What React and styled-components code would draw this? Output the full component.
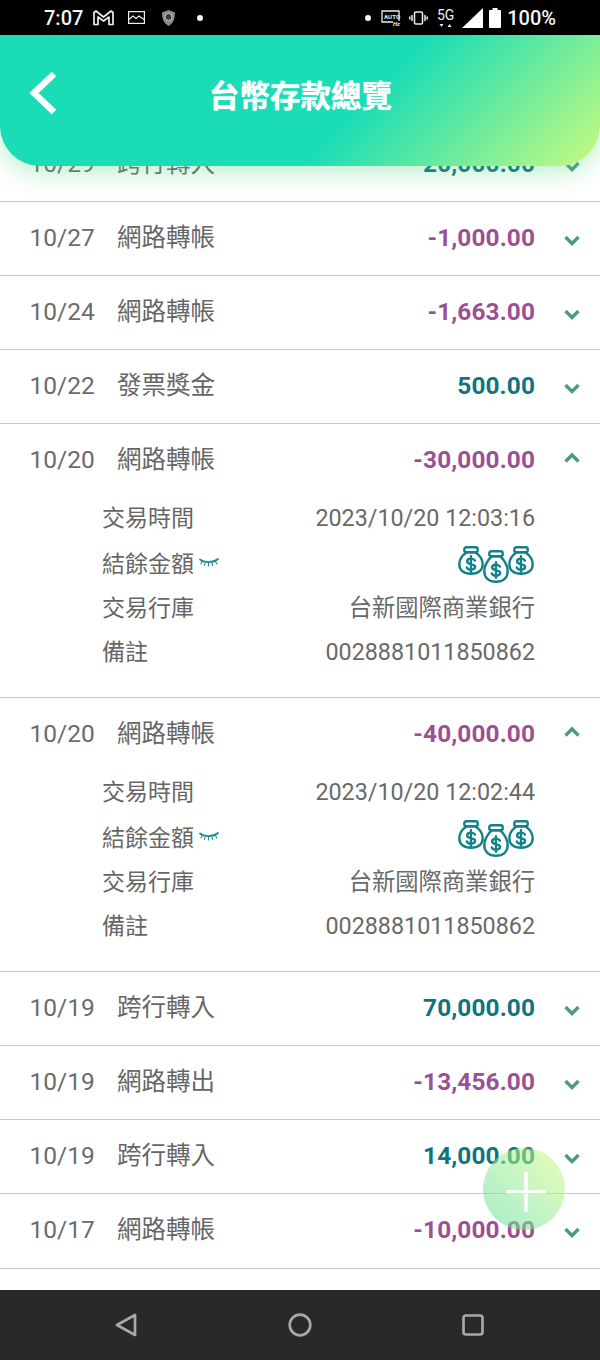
import React from "react";
import styled, { createGlobalStyle } from "styled-components";

const Global = createGlobalStyle`
  html, body { margin: 0; padding: 0; background: #fff; }
  * { box-sizing: border-box; }
  body { font-family: Roboto, "Noto Sans CJK TC", sans-serif; }
`;
const Screen = styled.div`
  width: 600px; height: 1360px; display: flex; flex-direction: column; overflow: hidden; position: relative;
`;
const StatusBar = styled.div`
  height: 35px; flex: none; background: #000; color: #f4f4f4; display: flex; align-items: center;
  padding: 0 44px 0 44px; font-family: Roboto, sans-serif; font-size: 20px; font-weight: 500;
`;
const StatusGroup = styled.div`
  display: flex; align-items: center; gap: ${p => p.$gap || 10}px;
`;
const Spacer = styled.div`flex: 1;`;
const Dot = styled.span`
  width: 6px; height: 6px; border-radius: 50%; background: #fff; display: block;
`;
const Main = styled.div`
  flex: 1; position: relative; overflow: hidden; background: #fff; min-height: 0;
`;
const Header = styled.div`
  position: absolute; top: 0; left: 0; right: 0; height: 131px; z-index: 2;
  border-radius: 0 0 40px 40px;
  background: linear-gradient(135deg, #1adcb7 0%, #1adcb7 59%, #c8fb80 100%);
  box-shadow: 0 6px 26px rgba(70, 215, 120, 0.38);
  display: flex; align-items: center; justify-content: center; color: #fff;
`;
const Back = styled.svg`
  position: absolute; left: 28px; top: 34px; width: 32px; height: 48px;
`;
const Title = styled.div`
  font-size: 30.5px; font-weight: 700; font-family: "Noto Sans CJK TC", sans-serif; line-height: 1; margin: 0 0 12px 1px;
  text-shadow: 0 0 1px #fff;
`;
const List = styled.div`
  margin-top: 93px; display: flex; flex-direction: column;
`;
const Row = styled.div`
  border-bottom: 1px solid #c9c9c9; padding: 0 20px 0 29.5px; color: #666;
  &:last-child { padding-bottom: 1px; }
`;
const Top = styled.div`
  height: 73px; padding-bottom: 3px; display: flex; align-items: center;
`;
const Date = styled.span`
  width: 87.5px; font-size: 24.5px; color: #6b6b6b;
`;
const Name = styled.span`
  flex: 1; font-size: 24.5px; font-family: "Noto Sans CJK TC", sans-serif; color: #666; line-height: 1; padding-bottom: 2px;
`;
const Amount = styled.span`
  font-size: 24.4px; font-weight: 700; letter-spacing: 0.1px; color: ${p => (p.$neg ? "#9b5094" : "#0d7480")};
`;
const Chevron = styled.svg`
  width: 16px; height: 12px; margin-left: 29px; margin-top: ${p => (p.$up ? -3 : 5)}px; flex: none;
`;
const Details = styled.div`
  padding: 0 45px 25px 72.5px; margin-top: -3px; display: flex; flex-direction: column;
`;
const DetailRow = styled.div`
  height: ${p => (p.$balance ? 46 : 44)}px; padding-top: ${p => (p.$balance ? 2 : 0)}px;
  display: flex; align-items: center; justify-content: space-between; color: #666;
`;
const Label = styled.span`
  font-family: "Noto Sans CJK TC", sans-serif; font-size: 23px; display: flex; align-items: center; gap: 5px; line-height: 1;
`;
const Value = styled.span`
  font-size: 23.300px; font-family: Roboto, "Noto Sans CJK TC", sans-serif; color: #696969; line-height: 1; padding-top: 5px;
`;
const BagsIcon = styled.svg`
  display: block; margin-top: 3px; flex: none;
`;
const Fab = styled.div`
  position: absolute; left: 483px; top: 1113px; width: 82px; height: 82px; border-radius: 50%; z-index: 3;
  background: linear-gradient(45deg, #60dca0 0%, #98ee95 50%, #d5fb7a 100%); opacity: 0.55;
  display: flex; align-items: center; justify-content: center; padding: 5px 0 0 4px;
`;
const NavBar = styled.div`
  height: 70px; flex: none; background: #292929; display: flex; align-items: center; justify-content: space-between;
  padding: 0 116px 0 115px;
`;

const Lash = () => (
  <svg width="20" height="12" viewBox="0 0 20 12" fill="none" stroke="#1f8f97" strokeLinecap="round">
    <path d="M1 3.500 C5 7, 14 7, 19 3" strokeWidth="1.800" />
    <path d="M3 5.500 2 8M6 6.800 5.500 9.500M9.500 7.200V10M13 6.800l.6 2.600M16.500 5.500 17.800 8" strokeWidth="1.100" />
  </svg>
);
const Bag = ({ x, y, tall }) => (
  <g transform={`translate(${x} ${y})`} stroke="#14808a" strokeLinejoin="round" strokeLinecap="round" fill="#fff">
    <path d={tall
      ? "M8.500 6.300C4 11 1.300 15 1.300 21c0 7 4.700 10.700 11.700 10.700S24.700 28 24.700 21c0-6-2.700-10-7.200-14.700Z"
      : "M8.800 6.300C4 9.500 1.300 13.500 1.300 18c0 6.500 4.700 9.700 11.700 9.700s11.700-3.200 11.700-9.700c0-4.500-2.700-8.500-7.500-11.700Z"} strokeWidth="2.400" />
    <rect x="6.300" y="1.200" width="13.400" height="5" rx="2" strokeWidth="2.400" />
    <g transform={`translate(0 ${tall ? 3 : 1})`}>
      <path d="M17 13.600c-.8-1.300-2.300-2-4-2-2.300 0-3.900 1.100-3.900 2.800 0 3.700 8 1.700 8 5.400 0 1.800-1.800 2.900-4.100 2.900-2 0-3.500-.8-4.200-2.300M13 9.300v15.400" fill="none" strokeWidth="2.400" />
    </g>
  </g>
);
const Bags = () => (
  <BagsIcon width="77" height="38" viewBox="0 0 77 38">
    <Bag x={0} y={1} />
    <Bag x={50} y={1} />
    <Bag x={25} y={5} tall />
  </BagsIcon>
);
const Chev = ({ up }) => (
  <Chevron $up={up} viewBox="0 0 16 12">
    <path d={up ? "M1.500 9.500 8 3l6.500 6.500" : "M1.500 3 8 9.500 14.500 3"} fill="none" stroke="#4f9a7c" strokeWidth="3.400" />
  </Chevron>
);

const rows = [
  ["10/29", "跨行轉入", "20,000.00", false],
  ["10/27", "網路轉帳", "-1,000.00", true],
  ["10/24", "網路轉帳", "-1,663.00", true],
  ["10/22", "發票獎金", "500.00", false],
  ["10/20", "網路轉帳", "-30,000.00", true, "2023/10/20 12:03:16"],
  ["10/20", "網路轉帳", "-40,000.00", true, "2023/10/20 12:02:44"],
  ["10/19", "跨行轉入", "70,000.00", false],
  ["10/19", "網路轉出", "-13,456.00", true],
  ["10/19", "跨行轉入", "14,000.00", false],
  ["10/17", "網路轉帳", "-10,000.00", true],
];

export default function App() {
  return (
    <Screen>
      <Global />
      <StatusBar>
        <StatusGroup $gap={9}>
          <span>7:07</span>
          <svg width="21" height="16" viewBox="0 0 21 16" fill="none" stroke="#eee" strokeWidth="1.700" strokeLinejoin="round" style={{ marginLeft: 1 }}><path d="M1 14.500V2.500l2-1.500 7.500 6L18 1l2 1.500v12h-4V7l-5.500 4L5 7v7.500Z" /></svg>
          <svg width="17" height="13" viewBox="0 0 17 13" fill="none" stroke="#eee" strokeWidth="1.200" style={{ marginLeft: 5 }}><rect x=".6" y=".6" width="15.800" height="11.800" /><path d="M1 8.500 5 5l3 2.500L11 5l5 3.500" /></svg>
          <svg width="15" height="18" viewBox="0 0 15 18" style={{ marginLeft: 7 }}><path d="M7.500 1 14 3.500c0 6-1.500 10.500-6.500 13.500C2.500 14 1 9.500 1 3.500Z" fill="#8c8c8c" /><circle cx="7.500" cy="8" r="3.500" fill="#3b3b3b" stroke="#c9c9c9" /></svg>
          <Dot style={{ marginLeft: 12 }} />
        </StatusGroup>
        <Spacer />
        <StatusGroup $gap={8}>
          <Dot style={{ marginRight: 2 }} />
          <svg width="20" height="18" viewBox="0 0 20 18" fill="none"><path d="M18 12V2H1v11h11" stroke="#eee" strokeWidth="1.300" /><text x="3" y="9.500" fontSize="6.200" fontWeight="700" fill="#eee" fontFamily="Roboto">AUTO</text><text x="12" y="16.500" fontSize="6" fontStyle="italic" fontWeight="700" fill="#eee" fontFamily="Roboto">Hz</text></svg>
          <svg width="19" height="14" viewBox="0 0 19 14" fill="none" stroke="#eee" strokeWidth="1.500"><rect x="5.500" y="1" width="8" height="12" rx="1.300" /><path d="M3 4v6M16 4v6M.8 5.500v3M18.200 5.500v3" /></svg>
          <svg width="17" height="24" viewBox="0 0 17 24" style={{ marginLeft: 1 }}><text x="0" y="14" fontSize="14" fontWeight="400" fill="#eee" fontFamily="Roboto">5G</text><path d="M2.500 18h4L4.500 21ZM10.500 21h4l-2-3Z" fill="#eee" /></svg>
          <svg width="21" height="20" viewBox="0 0 21 20"><path d="M21 0v20H0Z" fill="#fff" /></svg>
          <svg width="12" height="20" viewBox="0 0 12 20" style={{ marginLeft: -2 }}><path d="M3.500 0h5v2H11a1 1 0 0 1 1 1v16a1 1 0 0 1-1 1H1a1 1 0 0 1-1-1V3a1 1 0 0 1 1-1h2.500Z" fill="#fff" /></svg>
          <span style={{ fontSize: 20, marginLeft: -2 }}>100%</span>
        </StatusGroup>
      </StatusBar>
      <Main>
        <Header>
          <Back viewBox="0 0 32 48" fill="none"><path d="M26 5 6 24l20 19" stroke="#fff" strokeWidth="6.500" /></Back>
          <Title>台幣存款總覽</Title>
        </Header>
        <List>
          {rows.map(([d, n, a, neg, time], i) => (
            <Row key={i}>
              <Top>
                <Date>{d}</Date>
                <Name>{n}</Name>
                <Amount $neg={neg}>{a}</Amount>
                <Chev up={!!time} />
              </Top>
              {time && (
                <Details>
                  <DetailRow><Label>交易時間</Label><Value>{time}</Value></DetailRow>
                  <DetailRow $balance><Label>結餘金額<Lash /></Label><Bags /></DetailRow>
                  <DetailRow><Label>交易行庫</Label><Value>台新國際商業銀行</Value></DetailRow>
                  <DetailRow><Label>備註</Label><Value>0028881011850862</Value></DetailRow>
                </Details>
              )}
            </Row>
          ))}
        </List>
        <Fab>
          <svg width="40" height="40" viewBox="0 0 40 40"><path d="M20 1v38M1 20h38" stroke="#fff" strokeWidth="3.500" strokeLinecap="round" /></svg>
        </Fab>
      </Main>
      <NavBar>
        <svg width="22" height="24" viewBox="0 0 22 24" fill="none" stroke="#a8a8a8" strokeWidth="2.700" strokeLinejoin="round"><path d="M20 2v20L2 12Z" /></svg>
        <svg width="24" height="24" viewBox="0 0 24 24" fill="none" stroke="#a8a8a8" strokeWidth="2.700"><circle cx="12" cy="12" r="10.300" /></svg>
        <svg width="22" height="22" viewBox="0 0 22 22" fill="none" stroke="#a8a8a8" strokeWidth="2.700"><rect x="1.500" y="1.500" width="19" height="19" rx="2.500" /></svg>
      </NavBar>
    </Screen>
  );
}
